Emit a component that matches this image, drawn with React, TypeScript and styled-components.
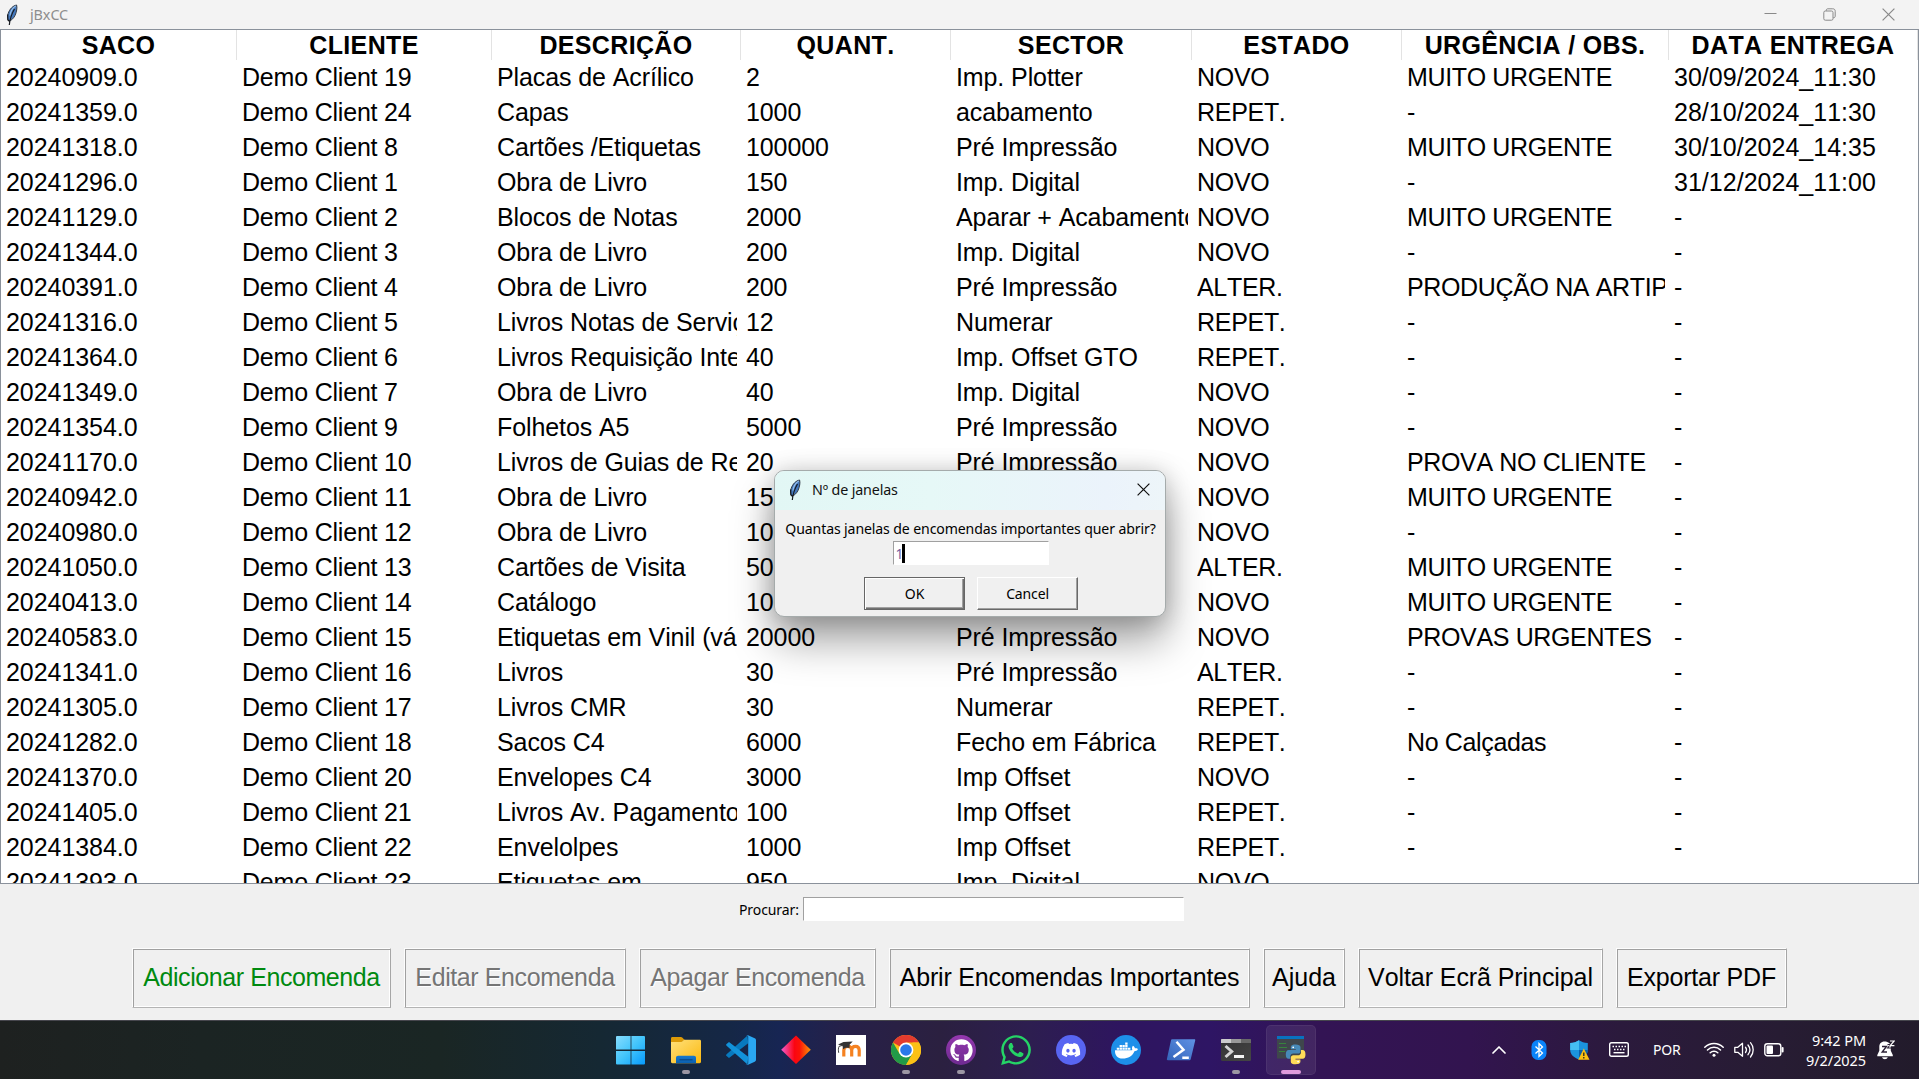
import React from "react";
import styled, { createGlobalStyle, css } from "styled-components";
import { FaDiscord, FaDocker, FaGithub, FaWhatsapp } from "react-icons/fa";

const GlobalStyle = createGlobalStyle`
  * { box-sizing: border-box; }
  html, body { margin: 0; padding: 0; overflow: hidden; }
  body { font-family: "Noto Sans", "Open Sans", sans-serif; background: #f0f0f0; }
`;

const Desktop = styled.div`
  position: relative;
  display: flex;
  flex-direction: column;
  width: 1919px;
  height: 1079px;
  overflow: hidden;
  background: #f0f0f0;
`;

const TitleBar = styled.header`
  display: flex;
  align-items: center;
  flex: none;
  height: 29px;
  padding: 0 24px 0 6px;
  background: #f3f3f3;
`;

const TitleText = styled.span<{ $active?: boolean }>`
  flex: 1;
  margin-left: ${(p) => (p.$active ? 11 : 12)}px;
  font-size: ${(p) => (p.$active ? 14.3 : 14.4)}px;
  line-height: 20px;
  letter-spacing: ${(p) => (p.$active ? -0.15 : -0.1)}px;
  color: ${(p) => (p.$active ? "#111" : "#8d8d8d")};
  white-space: nowrap;
`;

const WindowControls = styled.div`
  display: flex;
  align-items: center;
  gap: 46px;
`;

const TableFrame = styled.main`
  flex: none;
  height: 855px;
  border: 1px solid #8a919b;
  background: #fff;
  overflow: hidden;
  font-family: "Liberation Sans", Arial, sans-serif;
  font-size: 25px;
  font-kerning: none;
  color: #000;
`;

const gridColumns = css`
  display: grid;
  grid-template-columns: 236px 255px 249px 210px 241px 210px 267px 249px;
`;

const HeaderRow = styled.div`
  ${gridColumns}
  height: 30px;
  font-weight: 700;
`;

const HeaderCell = styled.div`
  display: flex;
  align-items: center;
  justify-content: center;
  border-right: 1px solid #e3e3e3;
  line-height: 28px;
  padding-bottom: 1px;
  letter-spacing: 0.35px;
  white-space: nowrap;
`;

const BodyRow = styled.div`
  ${gridColumns}
  height: 35px;
`;

const Cell = styled.div<{ $tracking: number }>`
  margin: 0 4px 0 5px;
  line-height: 35px;
  letter-spacing: ${(p) => p.$tracking}px;
  overflow: hidden;
  white-space: nowrap;
`;

const SearchBar = styled.div`
  display: flex;
  align-items: center;
  flex: none;
  height: 64px;
  padding: 0 0 14px 739px;
`;

const SearchLabel = styled.label`
  width: 64px;
  padding-top: 1px;
  font-size: 14px;
  letter-spacing: -0.1px;
  color: #000;
  white-space: nowrap;
`;

const SunkenInput = styled.div<{ $w: number }>`
  display: flex;
  align-items: center;
  width: ${(p) => p.$w}px;
  height: 24px;
  padding-left: 2px;
  background: #fff;
  border: 1px solid;
  border-color: #a0a0a0 #fff #fff #a0a0a0;
  font-size: 14px;
  color: #6f5d9e;
`;

const Caret = styled.i`
  width: 3px;
  height: 19px;
  margin-left: -2px;
  background: #000;
`;

const ActionBar = styled.nav`
  display: flex;
  flex: none;
  gap: 13px;
  height: 72px;
  padding: 0 0 12px 132px;
`;

const ActionButton = styled.button<{ $w: number; $tracking: number; $tone?: string; $disabled?: boolean }>`
  width: ${(p) => p.$w}px;
  height: 60px;
  padding: 0 0 1px;
  background: #f0f0f0;
  border: 1px solid;
  border-color: #fdfdfd #a6a6a6 #b4b4b4 #fdfdfd;
  box-shadow: inset 1px 1px 0 #a0a0a0, inset -1px -1px 0 #fff;
  font-family: "Liberation Sans", Arial, sans-serif;
  font-size: 25px;
  font-kerning: none;
  letter-spacing: ${(p) => p.$tracking}px;
  white-space: nowrap;
  color: ${(p) => p.$tone ?? "#000"};
  text-shadow: ${(p) => (p.$disabled ? "1px 1px 0 #fff" : "none")};
`;

const Dialog = styled.section`
  position: absolute;
  left: 774px;
  top: 470px;
  width: 392px;
  height: 147px;
  border: 1px solid #a5abab;
  border-radius: 10px;
  background: #f0f0f0;
  box-shadow: 0 24px 42px rgba(0, 0, 0, 0.36), 0 2px 24px rgba(0, 0, 0, 0.2);
  overflow: hidden;
`;

const DialogTitleBar = styled.div`
  display: flex;
  align-items: center;
  height: 39px;
  padding: 0 15px 2px 14px;
  background: linear-gradient(90deg, #e2f7f5 0%, #e6f8f7 40%, #ebf3fb 85%, #edf5f9 100%);
`;

const DialogBody = styled.div`
  display: flex;
  flex-direction: column;
  align-items: center;
  padding: 8px 0 0 1px;
`;

const Prompt = styled.p`
  margin: 0 0 2px;
  height: 21px;
  font-size: 14.1px;
  line-height: 21px;
  letter-spacing: -0.12px;
  color: #000;
  white-space: nowrap;
`;

const DialogButtons = styled.div`
  display: flex;
  gap: 12px;
  margin: 12px 0 0 1px;
`;

const DialogButton = styled.button<{ $primary?: boolean }>`
  width: 101px;
  height: 33px;
  padding: 0;
  background: #f0f0f0;
  border: 1px solid;
  border-color: ${(p) => (p.$primary ? "#666" : "#fff #696969 #696969 #fff")};
  box-shadow: ${(p) =>
    p.$primary
      ? "inset 1px 1px 0 #fff, inset -1px -1px 0 #707070, inset -2px -2px 0 #a0a0a0"
      : "inset -1px -1px 0 #a0a0a0"};
  font-family: "Noto Sans", "Open Sans", sans-serif;
  font-size: 14px;
  letter-spacing: -0.15px;
  color: #000;
`;

const Taskbar = styled.footer`
  display: flex;
  flex: none;
  height: 59px;
  padding: 0 24px 0 602px;
  border-top: 1px solid #46464d;
  background: linear-gradient(
    90deg,
    #1e2120 0, #1b2423 200px, #1a2624 440px, #152833 600px, #152746 730px, #172553 780px,
    #272048 850px, #2b2040 940px, #2d1e50 1030px, #2e155f 1120px, #2e1564 1210px,
    #331454 1320px, #32144f 1470px, #2b1a3c 1620px, #271c33 1780px, #221b2b 1919px
  );
`;

const AppStrip = styled.div`
  display: flex;
`;

const AppSlot = styled.div<{ $active?: boolean }>`
  display: flex;
  flex-direction: column;
  align-items: center;
  width: 50px;
  height: 50px;
  margin: 4px 1px 0 4px;
  padding-top: 10px;
  border-radius: 5px;
  background: ${(p) => (p.$active ? "rgba(255,255,255,0.08)" : "transparent")};
  box-shadow: ${(p) => (p.$active ? "inset 0 0 0 1px rgba(255,255,255,0.06)" : "none")};
`;

const RunMark = styled.span<{ $active?: boolean }>`
  width: ${(p) => (p.$active ? 20 : 8)}px;
  height: 4px;
  margin-top: 5px;
  border-radius: 2px;
  background: ${(p) => (p.$active ? "#df9bdc" : "#9c96a3")};
`;

const Disc = styled.span<{ $bg: string }>`
  display: flex;
  align-items: center;
  justify-content: center;
  width: 30px;
  height: 30px;
  border-radius: 50%;
  background: ${(p) => p.$bg};
  color: #fff;
`;

const WhatsappGlyph = styled(FaWhatsapp)`
  width: 34px;
  height: 34px;
  margin: -2px;
  color: #25d366;
`;

const MoodleTile = styled.span`
  display: flex;
  width: 30px;
  height: 30px;
  background: #fff;
`;

const Tray = styled.div`
  display: flex;
  align-items: center;
  margin-left: auto;
  padding-bottom: 1px;
  color: #fff;
`;

const TrayItem = styled.span<{ $gap: number; $w: number }>`
  display: flex;
  width: ${(p) => p.$w}px;
  margin-right: ${(p) => p.$gap}px;
  font-size: 14px;
  letter-spacing: -0.15px;
`;

const Clock = styled.div`
  width: 70px;
  margin-right: 11px;
  padding-top: 1px;
  font-size: 14.5px;
  line-height: 20px;
  letter-spacing: -0.08px;
  text-align: right;
  white-space: nowrap;
`;

const Feather = () => (
  <svg width="12" height="22" viewBox="0 0 12 22">
    <path d="M10.6 1C7 1.7 3.6 5 2.200 9.400c-.8 2.500-.9 5-.2 6.400l1.200 1.300c2.200-.6 4.800-3.200 6-6C10.500 8.200 11.400 3.800 10.600 1Z" fill="#4478bd" stroke="#333b46" strokeWidth="1" />
    <path d="M9.700 2C6.500 3.800 4.600 7.500 3.900 11.500" fill="none" stroke="#9ac4ee" strokeWidth="1.100" />
    <path d="M8.500 5C5.800 9.500 4 14.500 3.300 21M1.600 10.500l.3 5.500 1.800 1.500" fill="none" stroke="#171a1f" strokeWidth="1.200" />
  </svg>
);

const CloseIcon = ({ color }: { color: string }) => (
  <svg width="13" height="13" viewBox="0 0 13 13" fill="none" stroke={color} strokeWidth="1.200">
    <path d="M.6.6l11.800 11.800M12.400.6L.6 12.400" />
  </svg>
);

const MinimizeIcon = () => (
  <svg width="13" height="13" viewBox="0 0 13 13" fill="none" stroke="#898989">
    <path d="M.5 5.500h12" />
  </svg>
);

const RestoreIcon = () => (
  <svg width="13" height="13" viewBox="0 0 13 13" fill="none" stroke="#898989">
    <rect x=".8" y="3" width="9.200" height="9.200" rx="1.500" />
    <path d="M3.200 2.800C3.200 1.300 3.800.8 5 .8h4.700c1.700 0 2.500.8 2.500 2.500V8c0 1.200-.6 1.800-2 1.800" />
  </svg>
);

const StartIcon = () => (
  <svg width="30" height="30" viewBox="0 0 30 30">
    <defs>
      <linearGradient id="start" x1="0" y1="0" x2="1" y2="1">
        <stop stopColor="#87dcfd" />
        <stop offset=".5" stopColor="#42c4fb" />
        <stop offset="1" stopColor="#069afc" />
      </linearGradient>
    </defs>
    <path d="M1 .9h13.600v13.700H0V1.900a1 1 0 0 1 1-1ZM15.400.9H28a1 1 0 0 1 1 1v12.700H15.400ZM0 15.900h14.600v13.700H1a1 1 0 0 1-1-1ZM15.400 15.900H29v12.700a1 1 0 0 1-1 1H15.400Z" fill="url(#start)" />
  </svg>
);

const FolderIcon = () => (
  <svg width="30" height="30" viewBox="0 0 30 30">
    <defs>
      <linearGradient id="folder" x1="0" y1="0" x2="1" y2="1">
        <stop stopColor="#ffe07a" />
        <stop offset="1" stopColor="#fbb90f" />
      </linearGradient>
      <linearGradient id="folderBase" x1="0" x2="0" y1="0" y2="1">
        <stop stopColor="#1679cf" />
        <stop offset="1" stopColor="#0a5fae" />
      </linearGradient>
    </defs>
    <path d="M0 3.500C0 2.500.6 2 1.500 2h8.300c.7 0 1.200.2 1.700.7L13.700 5 11 7H0Z" fill="#dc9a07" />
    <path d="M0 7h10.500l2.700-2.200h15.300c1 0 1.500.5 1.500 1.500v20.500c0 .9-.5 1.400-1.400 1.400H1.400C.5 28.200 0 27.700 0 26.800Z" fill="url(#folder)" />
    <path d="M5 28.200v-5.400c0-1.300.8-2.100 2.100-2.100h15.800c1.300 0 2.100.8 2.100 2.100v5.400Z" fill="url(#folderBase)" />
    <path d="M8.500 24.800h13" stroke="#084887" strokeWidth="1.200" />
  </svg>
);

const CodeIcon = () => (
  <svg width="30" height="30" viewBox="0 0 30 30">
    <path d="M22.200 8.200 3 23 .6 21.100c-.7-.6-.7-1.300 0-1.900L21.500.6Z" fill="#0879be" />
    <path d="M22.200 21.800 3 7 .6 8.900c-.7.6-.7 1.300 0 1.900l20.900 18.600Z" fill="#1292da" />
    <path d="M21.500.1 28.700 3.300c.8.400 1.300 1 1.300 1.900v19.600c0 .9-.5 1.500-1.300 1.900l-7.200 3.200c-.8.200-1.400 0-2-.5 1.300.8 2.700.2 2.700-1.400V2c0-1.600-1.400-2.200-2.700-1.400.6-.5 1.200-.7 2-.5Z" fill="#2aa7f2" />
  </svg>
);

const DiamondIcon = () => (
  <svg width="30" height="30" viewBox="0 0 30 30">
    <defs>
      <linearGradient id="diamond">
        <stop stopColor="#f45cd0" />
        <stop offset=".45" stopColor="#fb0511" />
        <stop offset=".62" stopColor="#fb1208" />
        <stop offset="1" stopColor="#fa9707" />
      </linearGradient>
    </defs>
    <path d="M15 .5 29.800 14.700 15 29 .2 14.700Z" fill="url(#diamond)" />
  </svg>
);

const MoodleIcon = () => (
  <MoodleTile>
    <svg width="30" height="30" viewBox="0 0 30 30">
      <path d="M7.800 21.500V15.300c0-2.800 1.400-4 3.900-4s4 1.300 4 4v6.200M15.700 15.300c0-2.700 1.400-4 3.800-4s3.700 1.300 3.700 4v6.200" fill="none" stroke="#f58221" strokeWidth="3.200" />
      <path d="M2 9.600 7.500 7l9.200-.6-3 3.100-.2 3.600c-2.500-.9-5-.5-6.300 1.200l-.7-3.200Z" fill="#333" />
      <path d="M7 10.200 3 11.400c-.7 1.800-.8 3.500-.3 6.400" fill="none" stroke="#444" />
    </svg>
  </MoodleTile>
);

const ChromeIcon = () => (
  <svg width="30" height="30" viewBox="0 0 30 30">
    <circle cx="15" cy="15" r="15" fill="#fbc116" />
    <path d="M15 15 2 7.500A15 15 0 0 1 28 7.500H15Z" fill="#e33b2e" />
    <path d="M2 7.500A15 15 0 0 0 15 30l6.500-11.250L15 15 8.500 18.750Z" fill="#229a48" />
    <path d="M28 7.500A15 15 0 0 1 15 30l6.500-11.250V7.500Z" fill="#fbc116" />
    <circle cx="15" cy="15" r="7.400" fill="#fff" />
    <circle cx="15" cy="15" r="5.800" fill="#2a78e9" />
  </svg>
);

const PowerShellIcon = () => (
  <svg width="30" height="30" viewBox="0 0 30 30">
    <defs>
      <linearGradient id="shell" x1="0" y1="1" x2="1" y2="0">
        <stop stopColor="#3465ba" />
        <stop offset="1" stopColor="#5f91e4" />
      </linearGradient>
    </defs>
    <path d="M6 4.300h22.300c.8 0 1.100.4.900 1.100L24.700 24.200c-.2.700-.6 1-1.300 1H1.800c-.8 0-1.100-.4-.9-1.100L5 5.300c.1-.6.500-1 1-1Z" fill="url(#shell)" />
    <path d="m10.500 6.800 7 8L7.500 22M16.300 22.700h6.500" fill="none" stroke="#fff" strokeWidth="2.500" />
  </svg>
);

const TerminalIcon = () => (
  <svg width="30" height="30" viewBox="0 0 30 30">
    <defs>
      <linearGradient id="term" x1="0" x2="1" y1="0" y2="1">
        <stop stopColor="#333" />
        <stop offset="1" stopColor="#454545" />
      </linearGradient>
    </defs>
    <rect y="4" width="30" height="22" rx="1.500" fill="url(#term)" />
    <path d="M1 4h9v4H0V5c0-.6.400-1 1-1Z" fill="#ccc" />
    <path d="M10 4h10v4H10Z" fill="#999" />
    <path d="M20 4h9c.6 0 1 .4 1 1v3H20Z" fill="#686868" />
    <path d="m4.500 11 6.200 5.500-6.200 5.500" fill="none" stroke="#d4d4d4" strokeWidth="3" />
    <path d="M13 21.500h10" stroke="#f4f4f4" strokeWidth="3" />
  </svg>
);

const PythonIcon = () => (
  <svg width="30" height="30" viewBox="0 0 30 30">
    <path d="M1 1h27v22.500H1Z" fill="#3f464c" />
    <path d="M1 1h27v3H1Z" fill="#0872bf" />
    <path d="M3 8.500h7M3 12.500h8M3 16.500h6" stroke="#36833d" strokeWidth="1.200" />
    <g transform="translate(9.800 9.600) scale(.82)">
      <path d="M12 0C6.500 0 6.200 2.400 6.200 3.300v2.500h6v.9H3.600C1.200 6.700 0 8.900 0 12c0 3.500 1.300 5.300 3.500 5.300h2v-2.800c0-2 1.700-3.500 3.700-3.500h5.700c1.600 0 3-1.300 3-3V3.200C17.900 1 15.400 0 12 0Z" fill="#4789b8" />
      <path d="M12 24c5.500 0 5.800-2.400 5.800-3.300v-2.500h-6v-.9h8.600c2.400 0 3.600-2.200 3.600-5.300 0-3.500-1.300-5.300-3.500-5.300h-2v2.800c0 2-1.700 3.500-3.700 3.500H9.100c-1.600 0-3 1.300-3 3v4.800C6.100 23 8.600 24 12 24Z" fill="#ffdc58" />
      <circle cx="9" cy="3.300" r="1.100" fill="#fff" />
      <circle cx="15" cy="20.700" r="1.100" fill="#fff" />
    </g>
  </svg>
);

const ChevronIcon = () => (
  <svg width="14" height="20" viewBox="0 0 14 20" fill="none" stroke="#fff" strokeWidth="1.700" strokeLinecap="round" strokeLinejoin="round">
    <path d="m1 13 6-6 6 6" />
  </svg>
);

const BluetoothIcon = () => (
  <svg width="16" height="20" viewBox="0 0 16 20" fill="none">
    <rect x=".5" width="15" height="20" rx="6.500" fill="#0a83fa" />
    <path d="m4.500 6.500 7 6.500-3.500 3.500v-13L11.500 7l-7 6.500" stroke="#fff" strokeWidth="1.300" />
  </svg>
);

const ShieldIcon = () => (
  <svg width="20" height="20" viewBox="0 0 20 20">
    <path d="M9 .3c2.300 1.700 5.200 2.500 8.800 2.600V10c0 4.300-3.500 7.600-8.800 9.500C3.700 17.600.2 14.300.2 10V2.900C3.800 2.800 6.700 2 9 .3Z" fill="#1b94dd" />
    <path d="M9 .3V10H.2V2.900C3.800 2.800 6.700 2 9 .3Z" fill="#45bff2" />
    <path d="M9 10h8.800c0 4.300-3.500 7.600-8.800 9.500Z" fill="#0c5fa8" />
    <path d="m13.800 8.600 5.700 11.100H8.200Z" fill="#fcc010" />
    <path d="M13.800 12.500v3.600M13.800 17v1.400" stroke="#222" strokeWidth="1.300" />
  </svg>
);

const KeyboardIcon = () => (
  <svg width="20" height="20" viewBox="0 0 20 20" fill="none" stroke="#fff">
    <rect x=".7" y="2.700" width="18.600" height="13.600" rx="1.800" strokeWidth="1.400" />
    <path d="M3.500 6.400h13.500" strokeWidth="1.500" strokeDasharray="1.500 1.500" />
    <path d="M5 9.500h11" strokeWidth="1.500" strokeDasharray="1.500 1.500" />
    <path d="M4.500 12.700h11" strokeWidth="1.400" />
  </svg>
);

const WifiIcon = () => (
  <svg width="20" height="20" viewBox="0 0 20 20" fill="none" stroke="#fff" strokeWidth="1.500" strokeLinecap="round">
    <path d="M.8 7.200a13 13 0 0 1 18.400 0M3.500 10a9.200 9.200 0 0 1 13 0M6.200 12.800a5.400 5.400 0 0 1 7.600 0" />
    <circle cx="10" cy="15.300" r="1.500" fill="#fff" stroke="none" />
  </svg>
);

const VolumeIcon = () => (
  <svg width="20" height="20" viewBox="0 0 20 20" fill="none" stroke="#fff" strokeWidth="1.300" strokeLinecap="round" strokeLinejoin="round">
    <path d="M.8 7.300h3l4.700-4v13l-4.700-4h-3ZM11.500 7.200c1.200 1.600 1.200 3.700 0 5.300M14 5c2.400 3 2.400 6.700 0 9.700M16.500 2.700c3.600 4.200 3.600 10.100 0 14.300" />
  </svg>
);

const BatteryIcon = () => (
  <svg width="20" height="20" viewBox="0 0 20 20" fill="none" stroke="#fff" strokeWidth="1.400">
    <rect x=".8" y="3.800" width="16" height="12" rx="2.600" />
    <rect x="2.500" y="5.500" width="6.500" height="8.600" rx="1" fill="#fff" stroke="none" />
    <path d="M18.600 8v3.600" strokeWidth="2" strokeLinecap="round" />
  </svg>
);

const BellIcon = () => (
  <svg width="18" height="20" viewBox="0 0 18 20">
    <path d="M7.500 1.500C4 1.500 2.300 3.800 2.300 7v3.800L.3 15v1.200h15.500V15l-2-4.200V7c0-3.200-2.300-5.500-6.300-5.500ZM5 17.200h5.800c-.5 1.300-1.500 2-2.900 2s-2.400-.7-2.900-2Z" fill="#fff" />
    <path d="M5 6.500h4.500L5.200 12H10" fill="none" stroke="#2b2035" strokeWidth="1.400" />
    <path d="M10.500 4.500h3L10.600 8H14" fill="none" stroke="#2b2035" strokeWidth="1.100" />
    <path d="M13 1h4.200L13.200 5.700h4.200" fill="none" stroke="#fff" strokeWidth="1.200" />
  </svg>
);

const COLUMNS = [
  { title: "SACO", tracking: -0.05 },
  { title: "CLIENTE", tracking: -0.2 },
  { title: "DESCRIÇÃO", tracking: -0.1 },
  { title: "QUANT.", tracking: -0.1 },
  { title: "SECTOR", tracking: -0.1 },
  { title: "ESTADO", tracking: -0.3 },
  { title: "URGÊNCIA / OBS.", tracking: -0.36 },
  { title: "DATA ENTREGA", tracking: 0.02 },
];

const ORDERS: string[][] = [
  ["20240909.0", "Demo Client 19", "Placas de Acrílico", "2", "Imp. Plotter", "NOVO", "MUITO URGENTE", "30/09/2024_11:30"],
  ["20241359.0", "Demo Client 24", "Capas", "1000", "acabamento", "REPET.", "-", "28/10/2024_11:30"],
  ["20241318.0", "Demo Client 8", "Cartões /Etiquetas", "100000", "Pré Impressão", "NOVO", "MUITO URGENTE", "30/10/2024_14:35"],
  ["20241296.0", "Demo Client 1", "Obra de Livro", "150", "Imp. Digital", "NOVO", "-", "31/12/2024_11:00"],
  ["20241129.0", "Demo Client 2", "Blocos de Notas", "2000", "Aparar + Acabamento", "NOVO", "MUITO URGENTE", "-"],
  ["20241344.0", "Demo Client 3", "Obra de Livro", "200", "Imp. Digital", "NOVO", "-", "-"],
  ["20240391.0", "Demo Client 4", "Obra de Livro", "200", "Pré Impressão", "ALTER.", "PRODUÇÃO NA ARTIP", "-"],
  ["20241316.0", "Demo Client 5", "Livros Notas de Serviç", "12", "Numerar", "REPET.", "-", "-"],
  ["20241364.0", "Demo Client 6", "Livros Requisição Inter", "40", "Imp. Offset GTO", "REPET.", "-", "-"],
  ["20241349.0", "Demo Client 7", "Obra de Livro", "40", "Imp. Digital", "NOVO", "-", "-"],
  ["20241354.0", "Demo Client 9", "Folhetos A5", "5000", "Pré Impressão", "NOVO", "-", "-"],
  ["20241170.0", "Demo Client 10", "Livros de Guias de Re", "20", "Pré Impressão", "NOVO", "PROVA NO CLIENTE", "-"],
  ["20240942.0", "Demo Client 11", "Obra de Livro", "150", "Pré Impressão", "NOVO", "MUITO URGENTE", "-"],
  ["20240980.0", "Demo Client 12", "Obra de Livro", "100", "Pré Impressão", "NOVO", "-", "-"],
  ["20241050.0", "Demo Client 13", "Cartões de Visita", "500", "Pré Impressão", "ALTER.", "MUITO URGENTE", "-"],
  ["20240413.0", "Demo Client 14", "Catálogo", "100", "Imp. Digital", "NOVO", "MUITO URGENTE", "-"],
  ["20240583.0", "Demo Client 15", "Etiquetas em Vinil (vár", "20000", "Pré Impressão", "NOVO", "PROVAS URGENTES", "-"],
  ["20241341.0", "Demo Client 16", "Livros", "30", "Pré Impressão", "ALTER.", "-", "-"],
  ["20241305.0", "Demo Client 17", "Livros CMR", "30", "Numerar", "REPET.", "-", "-"],
  ["20241282.0", "Demo Client 18", "Sacos C4", "6000", "Fecho em Fábrica", "REPET.", "No Calçadas", "-"],
  ["20241370.0", "Demo Client 20", "Envelopes C4", "3000", "Imp Offset", "NOVO", "-", "-"],
  ["20241405.0", "Demo Client 21", "Livros Av. Pagamento", "100", "Imp Offset", "REPET.", "-", "-"],
  ["20241384.0", "Demo Client 22", "Envelolpes", "1000", "Imp Offset", "REPET.", "-", "-"],
  ["20241393.0", "Demo Client 23", "Etiquetas em", "950", "Imp. Digital", "NOVO", "", ""],
];

const ACTIONS = [
  { label: "Adicionar Encomenda", width: 259, tracking: -0.42, tone: "#008a10" },
  { label: "Editar Encomenda", width: 222, tracking: -0.4, tone: "#757575", disabled: true },
  { label: "Apagar Encomenda", width: 237, tracking: -0.4, tone: "#757575", disabled: true },
  { label: "Abrir Encomendas Importantes", width: 361, tracking: -0.18 },
  { label: "Ajuda", width: 82, tracking: 0 },
  { label: "Voltar Ecrã Principal", width: 245, tracking: -0.08 },
  { label: "Exportar PDF", width: 171, tracking: -0.2 },
];

const APPS: { name: string; icon: React.ReactNode; running?: boolean; active?: boolean }[] = [
  { name: "start", icon: <StartIcon /> },
  { name: "files", icon: <FolderIcon />, running: true },
  { name: "code", icon: <CodeIcon /> },
  { name: "diamond", icon: <DiamondIcon /> },
  { name: "moodle", icon: <MoodleIcon /> },
  { name: "chrome", icon: <ChromeIcon />, running: true },
  { name: "github", icon: <Disc $bg="linear-gradient(#9438ae, #6f2a91)"><FaGithub size={23} /></Disc>, running: true },
  { name: "whatsapp", icon: <WhatsappGlyph /> },
  { name: "discord", icon: <Disc $bg="#5865f2"><FaDiscord size={20} /></Disc> },
  { name: "docker", icon: <Disc $bg="#1d8fe9"><FaDocker size={23} /></Disc> },
  { name: "powershell", icon: <PowerShellIcon /> },
  { name: "terminal", icon: <TerminalIcon />, running: true },
  { name: "python", icon: <PythonIcon />, running: true, active: true },
];

export default function App() {
  return (
    <Desktop>
      <GlobalStyle />
      <TitleBar>
        <Feather />
        <TitleText>jBxCC</TitleText>
        <WindowControls>
          <MinimizeIcon />
          <RestoreIcon />
          <CloseIcon color="#898989" />
        </WindowControls>
      </TitleBar>

      <TableFrame>
        <HeaderRow>
          {COLUMNS.map((c) => (
            <HeaderCell key={c.title}>{c.title}</HeaderCell>
          ))}
        </HeaderRow>
        {ORDERS.map((order) => (
          <BodyRow key={order[0]}>
            {order.map((value, i) => (
              <Cell key={i} $tracking={COLUMNS[i].tracking}>{value}</Cell>
            ))}
          </BodyRow>
        ))}
      </TableFrame>

      <SearchBar>
        <SearchLabel>Procurar:</SearchLabel>
        <SunkenInput $w={381} />
      </SearchBar>

      <ActionBar>
        {ACTIONS.map((a) => (
          <ActionButton key={a.label} $w={a.width} $tracking={a.tracking} $tone={a.tone} $disabled={a.disabled}>
            {a.label}
          </ActionButton>
        ))}
      </ActionBar>

      <Taskbar>
        <AppStrip>
          {APPS.map((app) => (
            <AppSlot key={app.name} $active={app.active}>
              {app.icon}
              {app.running && <RunMark $active={app.active} />}
            </AppSlot>
          ))}
        </AppStrip>
        <Tray>
          <TrayItem $w={14} $gap={25}><ChevronIcon /></TrayItem>
          <TrayItem $w={16} $gap={23}><BluetoothIcon /></TrayItem>
          <TrayItem $w={20} $gap={19}><ShieldIcon /></TrayItem>
          <TrayItem $w={20} $gap={24}><KeyboardIcon /></TrayItem>
          <TrayItem $w={29} $gap={22}>POR</TrayItem>
          <TrayItem $w={20} $gap={10}><WifiIcon /></TrayItem>
          <TrayItem $w={20} $gap={10}><VolumeIcon /></TrayItem>
          <TrayItem $w={20} $gap={12}><BatteryIcon /></TrayItem>
          <Clock>
            <div>9:42 PM</div>
            <div>9/2/2025</div>
          </Clock>
          <BellIcon />
        </Tray>
      </Taskbar>

      <Dialog>
        <DialogTitleBar>
          <Feather />
          <TitleText $active>Nº de janelas</TitleText>
          <CloseIcon color="#111" />
        </DialogTitleBar>
        <DialogBody>
          <Prompt>Quantas janelas de encomendas importantes quer abrir?</Prompt>
          <SunkenInput $w={156}>
            1<Caret />
          </SunkenInput>
          <DialogButtons>
            <DialogButton $primary>OK</DialogButton>
            <DialogButton>Cancel</DialogButton>
          </DialogButtons>
        </DialogBody>
      </Dialog>
    </Desktop>
  );
}
